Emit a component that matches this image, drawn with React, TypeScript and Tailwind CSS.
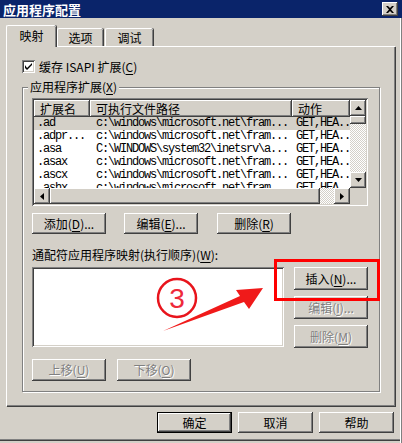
import React from "react";

const raised =
  "bg-[#d4d0c8] shadow-[inset_-1px_-1px_#404040,inset_1px_1px_#ffffff,inset_-2px_-2px_#808080,inset_2px_2px_#d4d0c8]";
const sunken =
  "shadow-[inset_1px_1px_#808080,inset_-1px_-1px_#ffffff,inset_2px_2px_#404040,inset_-2px_-2px_#d4d0c8]";
const disabledText = "text-[#808080] [text-shadow:1px_1px_0_#ffffff]";

function U({ c }: { c: string }) {
  return <span className="underline underline-offset-2">{c}</span>;
}

function Btn({
  children,
  w = "w-[74px]",
  h = "h-[21px]",
  disabled = false,
  def = false,
}: {
  children: React.ReactNode;
  w?: string;
  h?: string;
  disabled?: boolean;
  def?: boolean;
}) {
  if (def) {
    return (
      <div className={`${w} ${h} border border-black flex`}>
        <div className={`flex-1 flex items-center justify-center text-[12px] leading-[12px] text-black ${raised}`}>
          {children}
        </div>
      </div>
    );
  }
  return (
    <div
      className={`${w} ${h} flex items-center justify-center text-[12px] leading-[12px] ${raised} ${
        disabled ? disabledText : "text-black"
      }`}
    >
      {children}
    </div>
  );
}

const rows = [
  [".ad", "c:\\windows\\microsoft.net\\fram...", "GET,HEA.."],
  [".adpr...", "c:\\windows\\microsoft.net\\fram...", "GET,HEA.."],
  [".asa", "C:\\WINDOWS\\system32\\inetsrv\\a...", "GET,HEA.."],
  [".asax", "c:\\windows\\microsoft.net\\fram...", "GET,HEA.."],
  [".ascx", "c:\\windows\\microsoft.net\\fram...", "GET,HEA.."],
  [".ashx", "c:\\windows\\microsoft.net\\fram...", "GET,HEA.."],
];

const checker =
  "bg-[repeating-conic-gradient(#ffffff_0_25%,#d4d0c8_0_50%)] bg-[length:2px_2px]";

function Arrow({ dir }: { dir: "up" | "down" | "left" | "right" }) {
  const pts =
    dir === "up"
      ? "0,4 7,4 3.5,0"
      : dir === "down"
      ? "0,0 7,0 3.5,4"
      : dir === "left"
      ? "4,0 4,7 0,3.5"
      : "0,0 0,7 4,3.5";
  const wh = dir === "up" || dir === "down" ? { w: 7, h: 4 } : { w: 4, h: 7 };
  return (
    <svg width={wh.w} height={wh.h} viewBox={`0 0 ${wh.w} ${wh.h}`}>
      <polygon points={pts} fill="#000" />
    </svg>
  );
}

export default function App() {
  return (
    <div className="w-[402px] h-[443px] bg-[#d4d0c8] relative overflow-hidden flex flex-col font-['Noto_Sans_CJK_SC','Liberation_Sans',sans-serif] text-black">
      {/* Title bar */}
      <div className="h-[18px] bg-[#0a246a] flex items-center justify-between pl-[3px] pr-[4px] shrink-0">
        <span className="text-white font-bold text-[13px] leading-[13px]">应用程序配置</span>
        <div className={`w-[16px] h-[14px] flex items-center justify-center ${raised}`}>
          <svg width="8" height="7" viewBox="0 0 8 7">
            <path d="M0 0 L2 0 L4 2 L6 0 L8 0 L5 3.5 L8 7 L6 7 L4 5 L2 7 L0 7 L3 3.5 Z" fill="#000" />
          </svg>
        </div>
      </div>

      {/* Right window frame */}
      <div className="absolute top-[18px] right-0 bottom-0 w-[2px] border-l border-[#ffffff] bg-[#808080]" />

      {/* Tabs */}
      <div className="flex items-end pl-[6px] pt-[6px] h-[28px] shrink-0">
        <div className="relative z-10 w-[50px] h-[22px] -mb-[1px] bg-[#d4d0c8] border-l border-t border-white shadow-[inset_-1px_0_#808080,1px_0_#404040] rounded-t-[2px] flex items-center justify-center text-[12px] leading-[12px] pb-[2px]">
          映射
        </div>
        <div className="w-[46px] h-[18px] bg-[#d4d0c8] border-l border-t border-white shadow-[inset_-1px_0_#808080,1px_0_#404040] rounded-t-[2px] flex items-center justify-center text-[12px] leading-[12px] ml-[1px]">
          选项
        </div>
        <div className="w-[48px] h-[18px] bg-[#d4d0c8] border-l border-t border-white shadow-[inset_-1px_0_#808080,1px_0_#404040] rounded-t-[2px] flex items-center justify-center text-[12px] leading-[12px] ml-[2px]">
          调试
        </div>
      </div>

      {/* Tab panel */}
      <div className="ml-[6px] w-[389px] h-[360px] shrink-0 border-l border-t border-white shadow-[inset_-1px_-1px_#808080,1px_1px_#404040] flex flex-col pt-[13px] pl-[15px]">
        <div className="flex items-center h-[13px]">
          <div className={`w-[13px] h-[13px] bg-white flex items-center justify-center ${sunken}`}>
            <svg width="7" height="7" viewBox="0 0 7 7">
              <path d="M0 2 L0 5 L2 7 L7 2 L7 0 L2 5 Z" fill="#000" />
            </svg>
          </div>
          <span className="ml-[4px] text-[12px] leading-[12px] whitespace-nowrap">
            缓存 ISAPI 扩展(<U c="C" />)
          </span>
        </div>

        {/* Group box */}
        <div className="relative mt-[14px] w-[358px] h-[305px] border border-[#808080] shadow-[inset_1px_1px_#ffffff,1px_1px_#ffffff] pt-[10px] pl-[9px] flex flex-col">
          <span className="absolute -top-[7px] left-[5px] px-[2px] bg-[#d4d0c8] text-[12px] leading-[12px]">
            应用程序扩展(<U c="X" />)
          </span>

          {/* List view */}
          <div className={`w-[336px] h-[108px] bg-white p-[2px] flex flex-col ${sunken}`}>
            <div className="flex flex-1 min-h-0">
              <div className="flex flex-col w-[316px]">
                <div className="grid grid-cols-[56px_202px_58px] h-[17px] shrink-0">
                  {["扩展名", "可执行文件路径", "动作"].map((t) => (
                    <div key={t} className={`flex items-center pl-[6px] text-[12px] leading-[12px] ${raised}`}>
                      {t}
                    </div>
                  ))}
                </div>
                <div className="flex flex-col overflow-hidden flex-1 font-['Liberation_Mono','Noto_Sans_CJK_SC',monospace] text-[12px] tracking-[-1.2px]">
                  {rows.map((r, i) => (
                    <div
                      key={i}
                      className={`grid grid-cols-[56px_202px_58px] h-[13px] shrink-0 leading-[13px] ${
                        i === 0 ? "bg-[#d4d0c8]" : ""
                      }`}
                    >
                      <div className="pl-[3px] whitespace-nowrap overflow-hidden">{r[0]}</div>
                      <div className="pl-[6px] whitespace-nowrap overflow-hidden">{r[1]}</div>
                      <div className="pl-[4px] whitespace-nowrap">{r[2]}</div>
                    </div>
                  ))}
                </div>
              </div>
              {/* Vertical scrollbar */}
              <div className={`w-[16px] flex flex-col ${checker}`}>
                <div className={`h-[16px] flex items-center justify-center ${raised}`}>
                  <Arrow dir="up" />
                </div>
                <div className={`h-[8px] ${raised}`} />
                <div className="flex-1" />
                <div className={`h-[16px] flex items-center justify-center ${raised}`}>
                  <Arrow dir="down" />
                </div>
              </div>
            </div>
            {/* Horizontal scrollbar */}
            <div className="h-[16px] flex shrink-0">
              <div className={`w-[316px] flex ${checker}`}>
                <div className={`w-[16px] flex items-center justify-center ${raised}`}>
                  <Arrow dir="left" />
                </div>
                <div className={`w-[270px] ${raised}`} />
                <div className="flex-1" />
                <div className={`w-[16px] flex items-center justify-center ${raised}`}>
                  <Arrow dir="right" />
                </div>
              </div>
              <div className="w-[16px] bg-[#d4d0c8]" />
            </div>
          </div>

          <div className="flex mt-[7px] gap-[18px]">
            <Btn>
              添加(<U c="D" />)...
            </Btn>
            <Btn>
              编辑(<U c="E" />)...
            </Btn>
            <div className="ml-[1px]">
              <Btn>
                删除(<U c="R" />)
              </Btn>
            </div>
          </div>

          <div className="mt-[15px] text-[12px] leading-[12px] whitespace-nowrap">
            通配符应用程序映射(执行顺序)(<U c="W" />):
          </div>

          <div className="flex mt-[6px]">
            <div className={`w-[252px] h-[80px] bg-white ${sunken}`} />
            <div className="ml-[10px] flex flex-col gap-[6px]">
              <Btn h="h-[23px]">
                插入(<U c="N" />)...
              </Btn>
              <Btn h="h-[23px]" disabled>
                编辑(<U c="I" />)...
              </Btn>
              <Btn h="h-[23px]" disabled>
                删除(<U c="M" />)
              </Btn>
            </div>
          </div>

          <div className="flex mt-[11px] gap-[11px]">
            <Btn h="h-[22px]" disabled>
              上移(<U c="U" />)
            </Btn>
            <Btn h="h-[22px]" disabled>
              下移(<U c="O" />)
            </Btn>
          </div>
        </div>
      </div>

      {/* Bottom buttons */}
      <div className="flex justify-end gap-[6px] pr-[8px] mt-[6px] shrink-0">
        <Btn w="w-[75px]" def>
          确定
        </Btn>
        <Btn w="w-[75px]">取消</Btn>
        <Btn w="w-[75px]">帮助</Btn>
      </div>

      <div className="mt-auto mb-[2px] h-[2px] border-t border-[#808080] bg-[#404040] shrink-0" />

      {/* Annotation overlay */}
      <div className="absolute left-[274px] top-[259px] w-[106px] h-[42px] border-[3px] border-[#ff0000]" />
      <svg className="absolute left-0 top-0 pointer-events-none" width="402" height="443" viewBox="0 0 402 443">
        <circle cx="177" cy="298" r="19" fill="none" stroke="#e8141c" strokeWidth="2.5" />
        <text
          x="177"
          y="308"
          textAnchor="middle"
          fontSize="28"
          fontFamily="Liberation Sans, sans-serif"
          fill="#ee2a3a"
        >
          3
        </text>
        <polygon
          points="163,331 240,296 236,290 263,288 249,309 244,302"
          fill="#f01a1a"
        />
      </svg>
    </div>
  );
}
